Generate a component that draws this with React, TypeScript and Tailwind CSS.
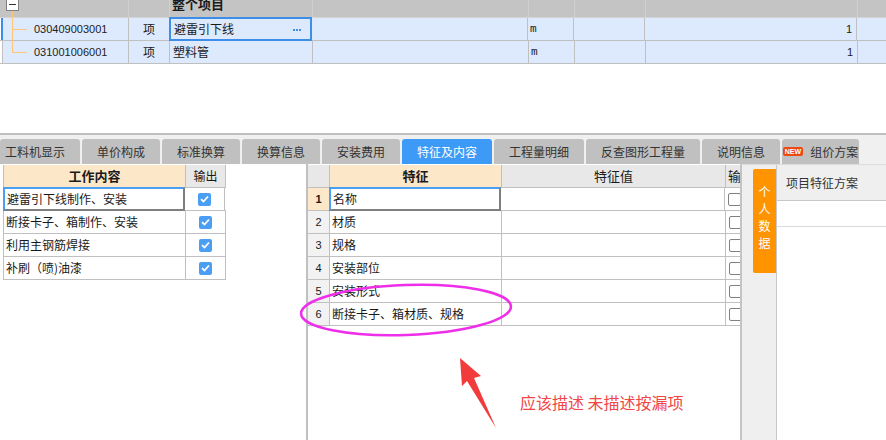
import React from "react";

const TABS = [
  { label: "工料机显示", w: "w-[80px] pr-[10px]" },
  { label: "单价构成", w: "w-[78px]" },
  { label: "标准换算", w: "w-[78px]" },
  { label: "换算信息", w: "w-[78px]" },
  { label: "安装费用", w: "w-[78px]" },
  { label: "特征及内容", w: "w-[90px]", active: true },
  { label: "工程量明细", w: "w-[90px]" },
  { label: "反查图形工程量", w: "w-[114px]" },
  { label: "说明信息", w: "w-[78px]" },
  { label: "组价方案", w: "w-[77px]", badge: true },
];

const WORK = ["避雷引下线制作、安装", "断接卡子、箱制作、安装", "利用主钢筋焊接", "补刷（喷)油漆"];
const FEATURES = ["名称", "材质", "规格", "安装部位", "安装形式", "断接卡子、箱材质、规格"];

function CheckOn() {
  return (
    <span className="w-[13px] h-[13px] rounded-[2px] bg-[#4a9ff5] flex items-center justify-center">
      <svg width="9" height="8" viewBox="0 0 9 8">
        <path d="M1 4.2 L3.5 6.5 L8 1.5" stroke="#fff" strokeWidth="1.8" fill="none" />
      </svg>
    </span>
  );
}

function TopRow({ code, name, selected, last }: { code: string; name: string; selected?: boolean; last?: boolean }) {
  return (
    <div className="flex h-[23px] border-b border-[#c0c0c0] bg-white">
      <div className={`w-[3px] ${selected ? "border-r-2 border-[#3d8ee8]" : "border-r border-[#c0c0c0]"}`} />
      <div className="flex flex-1 bg-[#dde9fc]">
        <div className="relative w-[126px] border-r border-[#c0c0c0] flex items-center pl-[31px] text-[11px] font-['Liberation_Sans',sans-serif] text-[#222]">
          <span className={`absolute left-[9px] top-0 w-px bg-[#ffc67a] ${last ? "h-[11px]" : "h-[23px]"}`} />
          <span className="absolute left-[9px] top-[11px] w-[15px] h-px bg-[#ffc67a]" />
          {code}
        </div>
        <div className="w-[41px] border-r border-[#c0c0c0] flex items-center justify-center text-[12px]">项</div>
        <div
          className={`relative w-[143px] flex items-center pl-[3px] text-[12px] ${
            selected ? "border-2 border-[#3d8ee8] -my-[1px] -ml-[1px] pl-[2px]" : "border-r border-[#c0c0c0]"
          }`}
        >
          {name}
          {selected && (
            <span className="absolute right-[9px] top-[10px] flex gap-[1px]">
              <span className="w-[2px] h-[2px] bg-[#3d8ee8]" />
              <span className="w-[2px] h-[2px] bg-[#3d8ee8]" />
              <span className="w-[2px] h-[2px] bg-[#3d8ee8]" />
            </span>
          )}
        </div>
        <div className="w-[216px] border-r border-[#c0c0c0]" />
        <div className="w-[46px] border-r border-[#c0c0c0] flex items-center pl-[2px] text-[11px] font-['DejaVu_Sans_Mono',monospace]">m</div>
        <div className="w-[71px] border-r border-[#c0c0c0]" />
        <div className="w-[212px] border-r border-[#c0c0c0] flex items-center justify-end pr-[4px] text-[11px] font-['Liberation_Sans',sans-serif]">1</div>
        <div className="flex-1" />
      </div>
    </div>
  );
}

export default function App() {
  return (
    <div className="relative w-[886px] h-[440px] overflow-hidden bg-white text-[#1a1a1a] font-['Noto_Sans_CJK_SC','Noto_Sans',sans-serif]">
      {/* top grid */}
      <div className="flex h-[18px] bg-[#c4c4c4] border-b border-[#d4d4d4]">
        <div className="relative w-[129px] border-r border-[#d0d0d0]">
          <span className="absolute left-[6px] -top-[2px] w-[13px] h-[13px] bg-white border border-[#808080] flex items-center justify-center">
            <span className="w-[7px] h-px bg-[#333]" />
          </span>
          <span className="absolute left-[12px] top-[11px] w-px h-[7px] bg-[#ffc67a]" />
        </div>
        <div className="w-[41px] border-r border-[#d0d0d0]" />
        <div className="w-[143px] border-r border-[#d0d0d0] pl-[2px] text-[13px] font-bold leading-[13px] -mt-[3px]">整个项目</div>
        <div className="w-[216px] border-r border-[#d0d0d0]" />
        <div className="w-[46px] border-r border-[#d0d0d0]" />
        <div className="w-[71px] border-r border-[#d0d0d0]" />
        <div className="w-[212px] border-r border-[#d0d0d0]" />
        <div className="flex-1" />
      </div>
      <TopRow code="030409003001" name="避雷引下线" selected />
      <TopRow code="031001006001" name="塑料管" last />

      <div className="h-[69px]" />
      <div className="h-[2px] bg-[#c0c0c0]" />

      {/* tabs */}
      <div className="flex gap-[2px] items-end h-[29px] bg-[#f0f0f0]">
        {TABS.map((t) => (
          <div
            key={t.label}
            className={`${t.w} h-[25px] rounded-t-[3px] flex items-center justify-center text-[12px] ${
              t.active ? "bg-[#3d9bf7] text-white" : "bg-[#c0c0c0] text-[#333]"
            }`}
          >
            {t.badge && (
              <span className="mr-[7px] h-[9px] px-[2px] rounded-[2px] bg-[#ec4a12] text-white text-[7px] leading-[9px] font-bold font-['Liberation_Sans',sans-serif]">
                NEW
              </span>
            )}
            {t.label}
          </div>
        ))}
      </div>

      {/* lower panes */}
      <div className="flex h-[276px]">
        {/* work content */}
        <div className="w-[306px] pt-[1px]">
          <div className="ml-[3px] w-[223px] border-l border-[#c0c0c0] text-[12px]">
            <div className="flex h-[23px] border-b border-[#c0c0c0]">
              <div className="w-[182px] bg-[#fde7c9] border-r border-[#c0c0c0] flex items-center justify-center font-bold text-[13px]">工作内容</div>
              <div className="w-[40px] bg-[#e8e8e8] border-r border-[#c0c0c0] flex items-center justify-center">输出</div>
            </div>
            {WORK.map((w, i) => (
              <div key={w} className="flex h-[23px] border-b border-[#c0c0c0]">
                <div
                  className={`w-[182px] flex items-center pl-[2px] ${
                    i === 0
                      ? "border-t-2 border-l-2 border-t-[#4a9ff5] border-l-[#4a9ff5] border-r-2 border-b-2 border-r-[#7f7f7f] border-b-[#7f7f7f] -mt-[1px] -ml-[1px] -mb-[1px]"
                      : "border-r border-[#c0c0c0]"
                  }`}
                >
                  {w}
                </div>
                <div className="w-[40px] border-r border-[#c0c0c0] flex items-center justify-center">
                  <CheckOn />
                </div>
              </div>
            ))}
          </div>
        </div>

        {/* features */}
        <div className="w-[434px] border-l-2 border-[#c0c0c0] overflow-hidden pt-[1px]">
          <div className="w-[460px] text-[12px]">
            <div className="flex h-[23px] border-b border-[#c0c0c0]">
              <div className="w-[22px] shrink-0 bg-[#e8e8e8] border-r border-[#c0c0c0]" />
              <div className="w-[172px] shrink-0 bg-[#fde7c9] border-r border-[#c0c0c0] flex items-center justify-center font-bold text-[13px]">特征</div>
              <div className="w-[224px] shrink-0 bg-[#e8e8e8] border-r border-[#c0c0c0] flex items-center justify-center text-[13px]">特征值</div>
              <div className="w-[40px] shrink-0 bg-[#e8e8e8] flex items-center pl-[2px] text-[13px]">输出</div>
            </div>
            {FEATURES.map((f, i) => (
              <div key={f} className="flex h-[23px] border-b border-[#c0c0c0]">
                <div
                  className={`w-[22px] shrink-0 border-r border-[#c0c0c0] flex items-center justify-center text-[11px] font-['Liberation_Sans',sans-serif] ${
                    i === 0 ? "bg-[#fde7c9] font-bold" : "bg-[#f2f2f2]"
                  }`}
                >
                  {i + 1}
                </div>
                <div
                  className={`w-[172px] shrink-0 flex items-center pl-[2px] ${
                    i === 0
                      ? "border-t-2 border-l-2 border-t-[#4a9ff5] border-l-[#4a9ff5] border-r-2 border-b-2 border-r-[#7f7f7f] border-b-[#7f7f7f] -mt-[1px] -ml-[1px] -mb-[1px]"
                      : "border-r border-[#c0c0c0]"
                  }`}
                >
                  {f}
                </div>
                <div className="w-[224px] shrink-0 border-r border-[#c0c0c0]" />
                <div className="w-[40px] shrink-0 flex items-center pl-[3px]">
                  <span className="w-[13px] h-[13px] rounded-[2px] border border-[#808080] bg-white" />
                </div>
              </div>
            ))}
          </div>
        </div>

        {/* side panel */}
        <div className="flex-1 flex bg-[#efefef] border-l-2 border-t border-[#c4c4c4] border-t-[#dcdcdc]">
          <div className="w-[34px] pl-[11px] pt-[4px]">
            <div className="w-[23px] h-[104px] rounded-l-[2px] bg-[#ff9300] flex flex-col items-center pt-[17px] text-white text-[12px]">
              <span className="h-[17px] leading-[12px]">个</span>
              <span className="h-[17px] leading-[12px]">人</span>
              <span className="h-[17px] leading-[12px]">数</span>
              <span className="h-[17px] leading-[12px]">据</span>
            </div>
          </div>
          <div className="flex-1 flex flex-col border-l border-[#c8c8c8]">
            <div className="h-[35px] flex items-center pl-[9px] text-[12px] text-[#333]">项目特征方案</div>
            <div className="flex-1 bg-white border-t border-[#c8c8c8]">
              <div className="h-[26px] border-b border-[#dadada]" />
            </div>
          </div>
        </div>
      </div>

      {/* annotations */}
      <svg className="absolute inset-0 pointer-events-none" width="886" height="440" viewBox="0 0 886 440">
        <ellipse cx="406" cy="310" rx="105" ry="25" fill="none" stroke="#ee2ee8" strokeWidth="2.5" transform="rotate(-2 406 310)" />
        <polygon points="460,358 481,376 474,378 496,428 467,381 462,386" fill="#f23b3b" />
      </svg>
      <div className="absolute left-[520px] top-[390px] text-[16px] text-[#f04646]">应该描述 未描述按漏项</div>
    </div>
  );
}
